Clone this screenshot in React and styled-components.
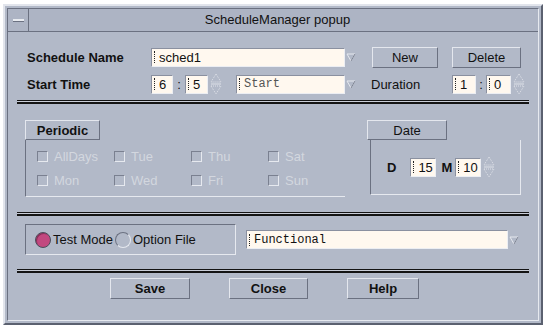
import React from 'react';
import styled, { createGlobalStyle } from 'styled-components';

const GlobalStyle = createGlobalStyle`
  body {
    margin: 0;
    background: #ffffff;
    font-family: "Liberation Sans", Arial, sans-serif;
  }
`;

const Window = styled.div`
  margin: 4px 0 0 3px;
  width: 540px;
  height: 321px;
  box-sizing: border-box;
  background: #b2b9c8;
  border: 2px solid;
  border-color: #e2e5ec #5b6170 #5b6170 #e2e5ec;
  padding: 2px;
`;

const Inner = styled.div`
  height: 100%;
  box-sizing: border-box;
  border: 1px solid;
  border-color: #6b7181 #e6e9ef #e6e9ef #6b7181;
  display: flex;
  flex-direction: column;
`;

const TitleBar = styled.div`
  height: 22px;
  display: flex;
  background: #adb4c4;
  border-bottom: 1px solid #6b7181;
`;

const MenuBox = styled.div`
  width: 20px;
  border-right: 1px solid #6b7181;
  display: flex;
  align-items: center;
  justify-content: center;
  &::after {
    content: '';
    width: 11px;
    height: 2px;
    background: #e8ebf0;
    border-bottom: 1px solid #6b7181;
  }
`;

const Title = styled.div`
  flex: 1;
  text-align: center;
  line-height: 22px;
  font-size: 13px;
  color: #111;
  padding-right: 12px;
`;

const Body = styled.div`
  flex: 1;
  display: flex;
  flex-direction: column;
`;

const Row = styled.div`
  display: flex;
  align-items: center;
  height: 20px;
  margin: ${p => p.$mt}px 0 0 19px;
`;

const Label = styled.div`
  width: ${p => p.$w}px;
  margin-left: ${p => p.$ml || 0}px;
  font-size: 13px;
  font-weight: ${p => (p.$bold ? 700 : 400)};
  color: #111;
`;

const Field = styled.div`
  width: ${p => p.$w}px;
  height: 19px;
  box-sizing: border-box;
  background: #fff8ef;
  border: 1px solid;
  border-color: #8a90a0 #eceef3 #eceef3 #8a90a0;
  display: flex;
  align-items: center;
  padding-left: 2px;
  font-size: ${p => (p.$mono ? 12 : 13)}px;
  font-family: ${p => (p.$mono ? '"Liberation Mono", monospace' : 'inherit')};
  color: ${p => (p.$dim ? '#555' : '#111')};
  overflow: hidden;
  white-space: nowrap;
`;

const Caret = styled.span`
  display: inline-block;
  width: 2px;
  height: 12px;
  border-left: 1px dotted #222;
  margin-right: 2px;
`;

const Combo = styled.div`
  display: flex;
  align-items: center;
  margin-left: ${p => p.$ml || 0}px;
`;

const ArrowBox = styled.div`
  width: 12px;
  height: 19px;
  display: flex;
  align-items: center;
  justify-content: center;
`;

const Colon = styled.span`
  width: ${p => p.$w || 12}px;
  text-align: center;
  font-size: 13px;
  color: #111;
`;

const Button = styled.button`
  width: ${p => p.$w}px;
  height: 21px;
  margin-left: ${p => p.$ml || 0}px;
  padding: 0;
  background: #b2b9c8;
  border: 1px solid;
  border-color: #e4e7ee #6b7181 #6b7181 #e4e7ee;
  font-family: "Liberation Sans", Arial, sans-serif;
  font-size: 13px;
  font-weight: ${p => (p.$bold ? 700 : 400)};
  color: #111;
`;

const Separator = styled.div`
  margin: ${p => p.$mt}px 9px 0;
  height: 1px;
  border-top: 1px solid #141414;
  border-bottom: 2px solid #141414;
  background: #c9cdd7;
`;

const Middle = styled.div`
  display: flex;
  margin: 16px 0 0 17px;
`;

const Group = styled.div`
  display: flex;
  flex-direction: column;
  margin-left: ${p => p.$ml || 0}px;
`;

const Tab = styled.div`
  width: ${p => p.$w}px;
  height: 20px;
  box-sizing: border-box;
  border: 1px solid;
  border-color: #e4e7ee #6b7181 #6b7181 #e4e7ee;
  display: flex;
  align-items: center;
  justify-content: center;
  font-size: 13px;
  font-weight: ${p => (p.$bold ? 700 : 400)};
  color: #111;
`;

const Frame = styled.div`
  width: ${p => p.$w}px;
  height: ${p => p.$h}px;
  margin-left: ${p => p.$ml || 0}px;
  box-sizing: border-box;
  border-left: 1px solid #6b7181;
  border-bottom: 1px solid #e6e9ef;
  border-right: ${p => (p.$right ? '1px solid #e6e9ef' : 'none')};
`;

const CheckGrid = styled.div`
  display: grid;
  grid-template-columns: repeat(4, 77px);
  row-gap: 12px;
  padding: 10px 0 0 11px;
`;

const Check = styled.div`
  display: flex;
  align-items: center;
  height: 12px;
  font-size: 13px;
  color: #d3d7df;
  &::before {
    content: '';
    width: 11px;
    height: 11px;
    box-sizing: border-box;
    border: 1px solid;
    border-color: #7a8090 #e6e9ef #e6e9ef #7a8090;
    margin-right: 6px;
  }
`;

const DateRow = styled.div`
  display: flex;
  align-items: center;
  padding: 16px 0 0 16px;
`;

const DateLetter = styled.span`
  font-size: 13px;
  font-weight: 700;
  color: #111;
  margin: 0 ${p => p.$mr}px 0 ${p => p.$ml || 0}px;
`;

const ModeRow = styled.div`
  display: flex;
  align-items: center;
  margin: 8px 0 0 17px;
`;

const RadioBox = styled.div`
  width: 211px;
  height: 31px;
  box-sizing: border-box;
  border: 1px solid;
  border-color: #6b7181 #e6e9ef #e6e9ef #6b7181;
  display: flex;
  align-items: center;
  padding-left: 9px;
`;

const Radio = styled.div`
  display: flex;
  align-items: center;
  font-size: 13px;
  color: #111;
  margin-right: 2px;
  &::before {
    content: '';
    width: 16px;
    height: 16px;
    box-sizing: border-box;
    border-radius: 50%;
    border: 1px solid;
    border-color: ${p => (p.$on ? '#4a4f5c' : '#6b7181 #e6e9ef #e6e9ef #6b7181')};
    background: ${p => (p.$on ? '#c2487f' : 'transparent')};
    box-shadow: ${p => (p.$on ? 'inset 1px 1px 0 #8a2d58' : 'none')};
    margin-right: 2px;
  }
`;

const ButtonRow = styled.div`
  display: flex;
  margin: 5px 0 0 102px;
`;

const DropArrow = () => (
  <ArrowBox>
    <svg width="10" height="10" viewBox="0 0 10 10">
      <polygon points="1,2 9,2 5,9" fill="none" stroke="#e6e9ef" strokeWidth="1" />
      <line x1="9" y1="2" x2="5" y2="9" stroke="#7a8090" strokeWidth="1" />
    </svg>
  </ArrowBox>
);

const Spinner = () => (
  <svg width="12" height="22" viewBox="0 0 12 22" style={{ marginLeft: 2 }}>
    <polygon points="6,1 11,9 1,9" fill="none" stroke="#dfe2e9" strokeDasharray="1 1" />
    <line x1="1" y1="11" x2="11" y2="11" stroke="#dfe2e9" />
    <polygon points="1,13 11,13 6,21" fill="none" stroke="#dfe2e9" strokeDasharray="1 1" />
  </svg>
);

const TextField = ({ w, children, mono, dim }) => (
  <Field $w={w} $mono={mono} $dim={dim}>
    <Caret />
    {children}
  </Field>
);

const days = ['AllDays', 'Tue', 'Thu', 'Sat', 'Mon', 'Wed', 'Fri', 'Sun'];

export default function App() {
  return (
    <>
      <GlobalStyle />
      <Window>
        <Inner>
          <TitleBar>
            <MenuBox />
            <Title>ScheduleManager popup</Title>
          </TitleBar>
          <Body>
            <Row $mt={15}>
              <Label $w={124} $bold>Schedule Name</Label>
              <Combo>
                <TextField w={194}>sched1</TextField>
                <DropArrow />
              </Combo>
              <Button $w={66} $ml={15}>New</Button>
              <Button $w={69} $ml={14}>Delete</Button>
            </Row>
            <Row $mt={7}>
              <Label $w={124} $bold>Start Time</Label>
              <TextField w={22}>6</TextField>
              <Colon>:</Colon>
              <TextField w={23}>5</TextField>
              <Spinner />
              <Combo $ml={14}>
                <TextField w={109} mono dim>Start</TextField>
                <DropArrow />
              </Combo>
              <Label $w={81} $ml={14}>Duration</Label>
              <TextField w={24}>1</TextField>
              <Colon $w={10}>:</Colon>
              <TextField w={25}>0</TextField>
              <Spinner />
            </Row>
            <Separator $mt={6} />
            <Middle>
              <Group>
                <Tab $w={75} $bold>Periodic</Tab>
                <Frame $w={320} $h={57}>
                  <CheckGrid>
                    {days.map(d => (
                      <Check key={d}>{d}</Check>
                    ))}
                  </CheckGrid>
                </Frame>
              </Group>
              <Group $ml={22}>
                <Tab $w={80}>Date</Tab>
                <Frame $w={151} $h={55} $right $ml={3}>
                  <DateRow>
                    <DateLetter $mr={14}>D</DateLetter>
                    <TextField w={26}>15</TextField>
                    <DateLetter $ml={5} $mr={3}>M</DateLetter>
                    <TextField w={26}>10</TextField>
                    <Spinner />
                  </DateRow>
                </Frame>
              </Group>
            </Middle>
            <Separator $mt={15} />
            <ModeRow>
              <RadioBox>
                <Radio $on>Test Mode</Radio>
                <Radio>Option File</Radio>
              </RadioBox>
              <Combo $ml={10}>
                <TextField w={262} mono>Functional</TextField>
                <DropArrow />
              </Combo>
            </ModeRow>
            <Separator $mt={14} />
            <ButtonRow>
              <Button $w={80} $bold>Save</Button>
              <Button $w={79} $ml={39} $bold>Close</Button>
              <Button $w={72} $ml={39} $bold>Help</Button>
            </ButtonRow>
          </Body>
        </Inner>
      </Window>
    </>
  );
}
